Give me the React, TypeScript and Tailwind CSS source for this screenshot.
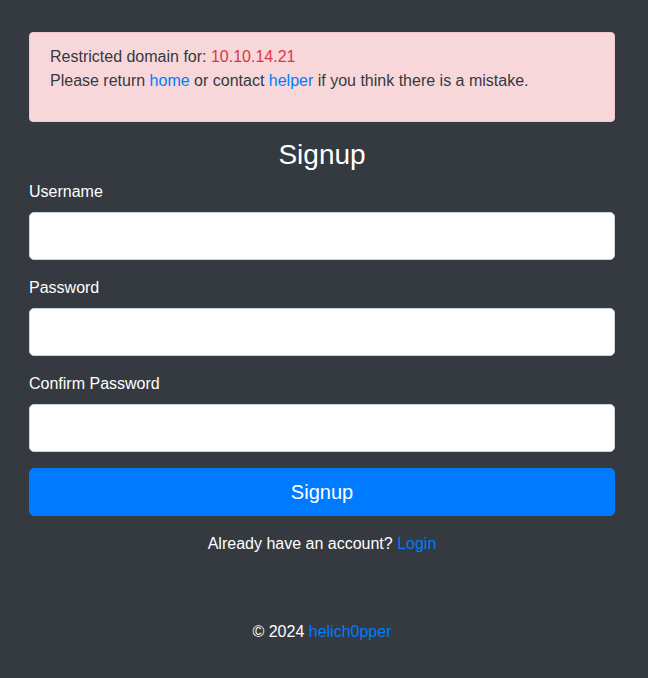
export default function App() {
  return (
    <div
      className="min-h-[678px] bg-[#343a40] text-white text-[16px] leading-[24px]"
      style={{ fontFamily: '"Liberation Sans", Arial, sans-serif' }}
    >
      <div className="ml-[29px] w-[586px] pt-[32px]">
        <div className="rounded-[4px] border border-[#f5c6cb] bg-[#f8d7da] px-[20px] py-[12px] text-[#343a40]">
          <p className="mb-[16px]">
            Restricted domain for: <span className="text-[#dc3545]">10.10.14.21</span>
            <br />
            Please return <a className="text-[#007bff]">home</a> or contact{" "}
            <a className="text-[#007bff]">helper</a> if you think there is a mistake.
          </p>
        </div>
        <h3 className="mt-[16px] mb-[8px] text-center text-[28px] leading-[33.6px] font-medium">Signup</h3>
        <div className="mb-[16px]">
          <label className="block mb-[8px]">Username</label>
          <input className="block w-full h-[48px] rounded-[5px] border border-[#ced4da] bg-white px-[16px] text-[20px] text-[#495057] outline-none" />
        </div>
        <div className="mb-[16px]">
          <label className="block mb-[8px]">Password</label>
          <input type="password" className="block w-full h-[48px] rounded-[5px] border border-[#ced4da] bg-white px-[16px] text-[20px] text-[#495057] outline-none" />
        </div>
        <div className="mb-[16px]">
          <label className="block mb-[8px]">Confirm Password</label>
          <input type="password" className="block w-full h-[48px] rounded-[5px] border border-[#ced4da] bg-white px-[16px] text-[20px] text-[#495057] outline-none" />
        </div>
        <button className="block w-full h-[48px] rounded-[5px] border border-[#007bff] bg-[#007bff] text-[20px] leading-[30px] text-white">
          Signup
        </button>
        <p className="mt-[16px] text-center">
          Already have an account? <a className="text-[#007bff]">Login</a>
        </p>
        <p className="mt-[64px] text-center">
          © 2024 <a className="text-[#007bff]">helich0pper</a>
        </p>
      </div>
    </div>
  );
}
